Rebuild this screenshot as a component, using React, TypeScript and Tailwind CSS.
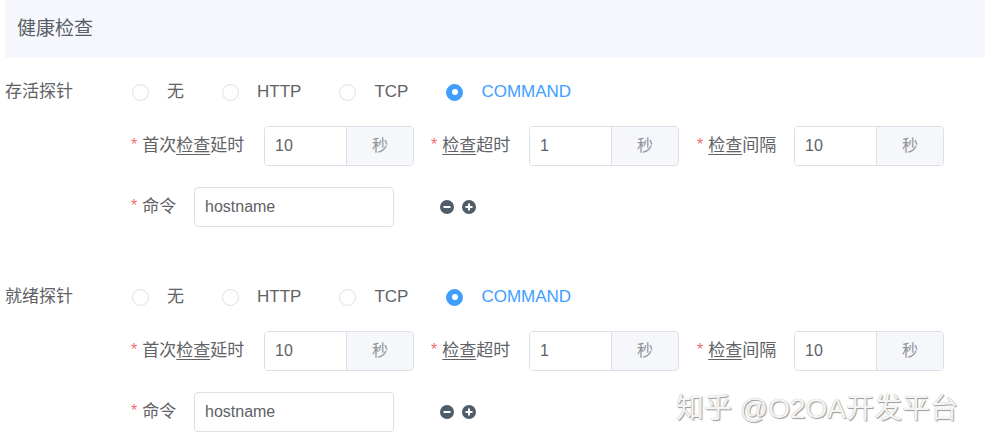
const options = ['无', 'HTTP', 'TCP', 'COMMAND'];

function Radio({ label, checked }: { label: string; checked?: boolean }) {
  return (
    <label className="flex items-center mr-[38px]">
      {checked ? (
        <span className="w-[17px] h-[17px] rounded-full bg-[#409eff] border border-[#409eff] flex items-center justify-center">
          <span className="w-[6px] h-[6px] rounded-full bg-white" />
        </span>
      ) : (
        <span className="w-[17px] h-[17px] rounded-full border border-[#dcdfe6] bg-white" />
      )}
      <span className={`ml-[18px] ${checked ? 'text-[#409eff]' : 'text-[#606266]'}`}>{label}</span>
    </label>
  );
}

function Label({ text, width }: { text: React.ReactNode; width: string }) {
  return (
    <span className={`flex items-center shrink-0 ${width}`}>
      <span className="text-[#f56c6c] mr-[5px] text-[16px] -mt-[3px]">*</span>
      <span className="text-[#606266]">{text}</span>
    </span>
  );
}

function Check() {
  return <span className="underline decoration-1 underline-offset-[3px]">检查</span>;
}

function SecondsInput({ value }: { value: string }) {
  return (
    <div className="w-[150px] h-10 flex border border-[#dcdfe6] rounded-[4px] overflow-hidden shrink-0">
      <div className="w-[81px] flex items-center px-[10px] text-[16px] text-[#606266] bg-white">{value}</div>
      <div className="flex-1 flex items-center justify-center bg-[#f5f7fa] border-l border-[#dcdfe6] text-[#909399] text-[16px]">
        秒
      </div>
    </div>
  );
}

function CircleIcon({ plus }: { plus?: boolean }) {
  return (
    <svg width="14" height="14" viewBox="0 0 14 14">
      <circle cx="7" cy="7" r="7" fill="#4f5c69" />
      <rect x="3.5" y="6" width="7" height="2" fill="#fff" />
      {plus && <rect x="6" y="3.5" width="2" height="7" fill="#fff" />}
    </svg>
  );
}

function Probe({ title, first }: { title: string; first?: boolean }) {
  return (
    <section className={first ? 'mt-[14px]' : 'mt-[50px]'}>
      <div className="flex items-center h-10">
        <span className="w-[132px] pl-[5px] text-[#606266] shrink-0">{title}</span>
        {options.map((o) => (
          <Radio key={o} label={o} checked={o === 'COMMAND'} />
        ))}
      </div>
      <div className="flex items-center h-10 mt-[14px] pl-[131px]">
        <Label width="w-[133px]" text={<>首次<Check />延时</>} />
        <SecondsInput value="10" />
        <span className="w-[17px] shrink-0" />
        <Label width="w-[98px]" text={<><Check />超时</>} />
        <SecondsInput value="1" />
        <span className="w-[18px] shrink-0" />
        <Label width="w-[97px]" text={<><Check />间隔</>} />
        <SecondsInput value="10" />
      </div>
      <div className="flex items-center h-10 mt-[21px] pl-[131px]">
        <Label width="w-[63px]" text="命令" />
        <div className="w-[200px] h-10 border border-[#dcdfe6] rounded-[4px] flex items-center px-[10px] text-[16px] text-[#606266]">
          hostname
        </div>
        <div className="flex items-center gap-[8px] ml-[46px]">
          <CircleIcon />
          <CircleIcon plus />
        </div>
      </div>
    </section>
  );
}

export default function App() {
  return (
    <div
      className="relative w-[985px] h-[445px] bg-white overflow-hidden text-[17px]"
      style={{ fontFamily: '"Liberation Sans", "Noto Sans CJK SC", sans-serif' }}
    >
      <div className="ml-[5px] h-[58px] bg-[#f5f7fc] flex items-center pl-[12px] text-[19px] text-[#5a5e66]">
        健康检查
      </div>
      <Probe title="存活探针" first />
      <Probe title="就绪探针" />
      <div className="absolute left-[676px] top-[388px] text-[28px] text-[#f4f4f4] [text-shadow:1px_1px_1px_#9a9a9a,0_0_1px_#b0b0b0]">
        知乎 @O2OA开发平台
      </div>
    </div>
  );
}
